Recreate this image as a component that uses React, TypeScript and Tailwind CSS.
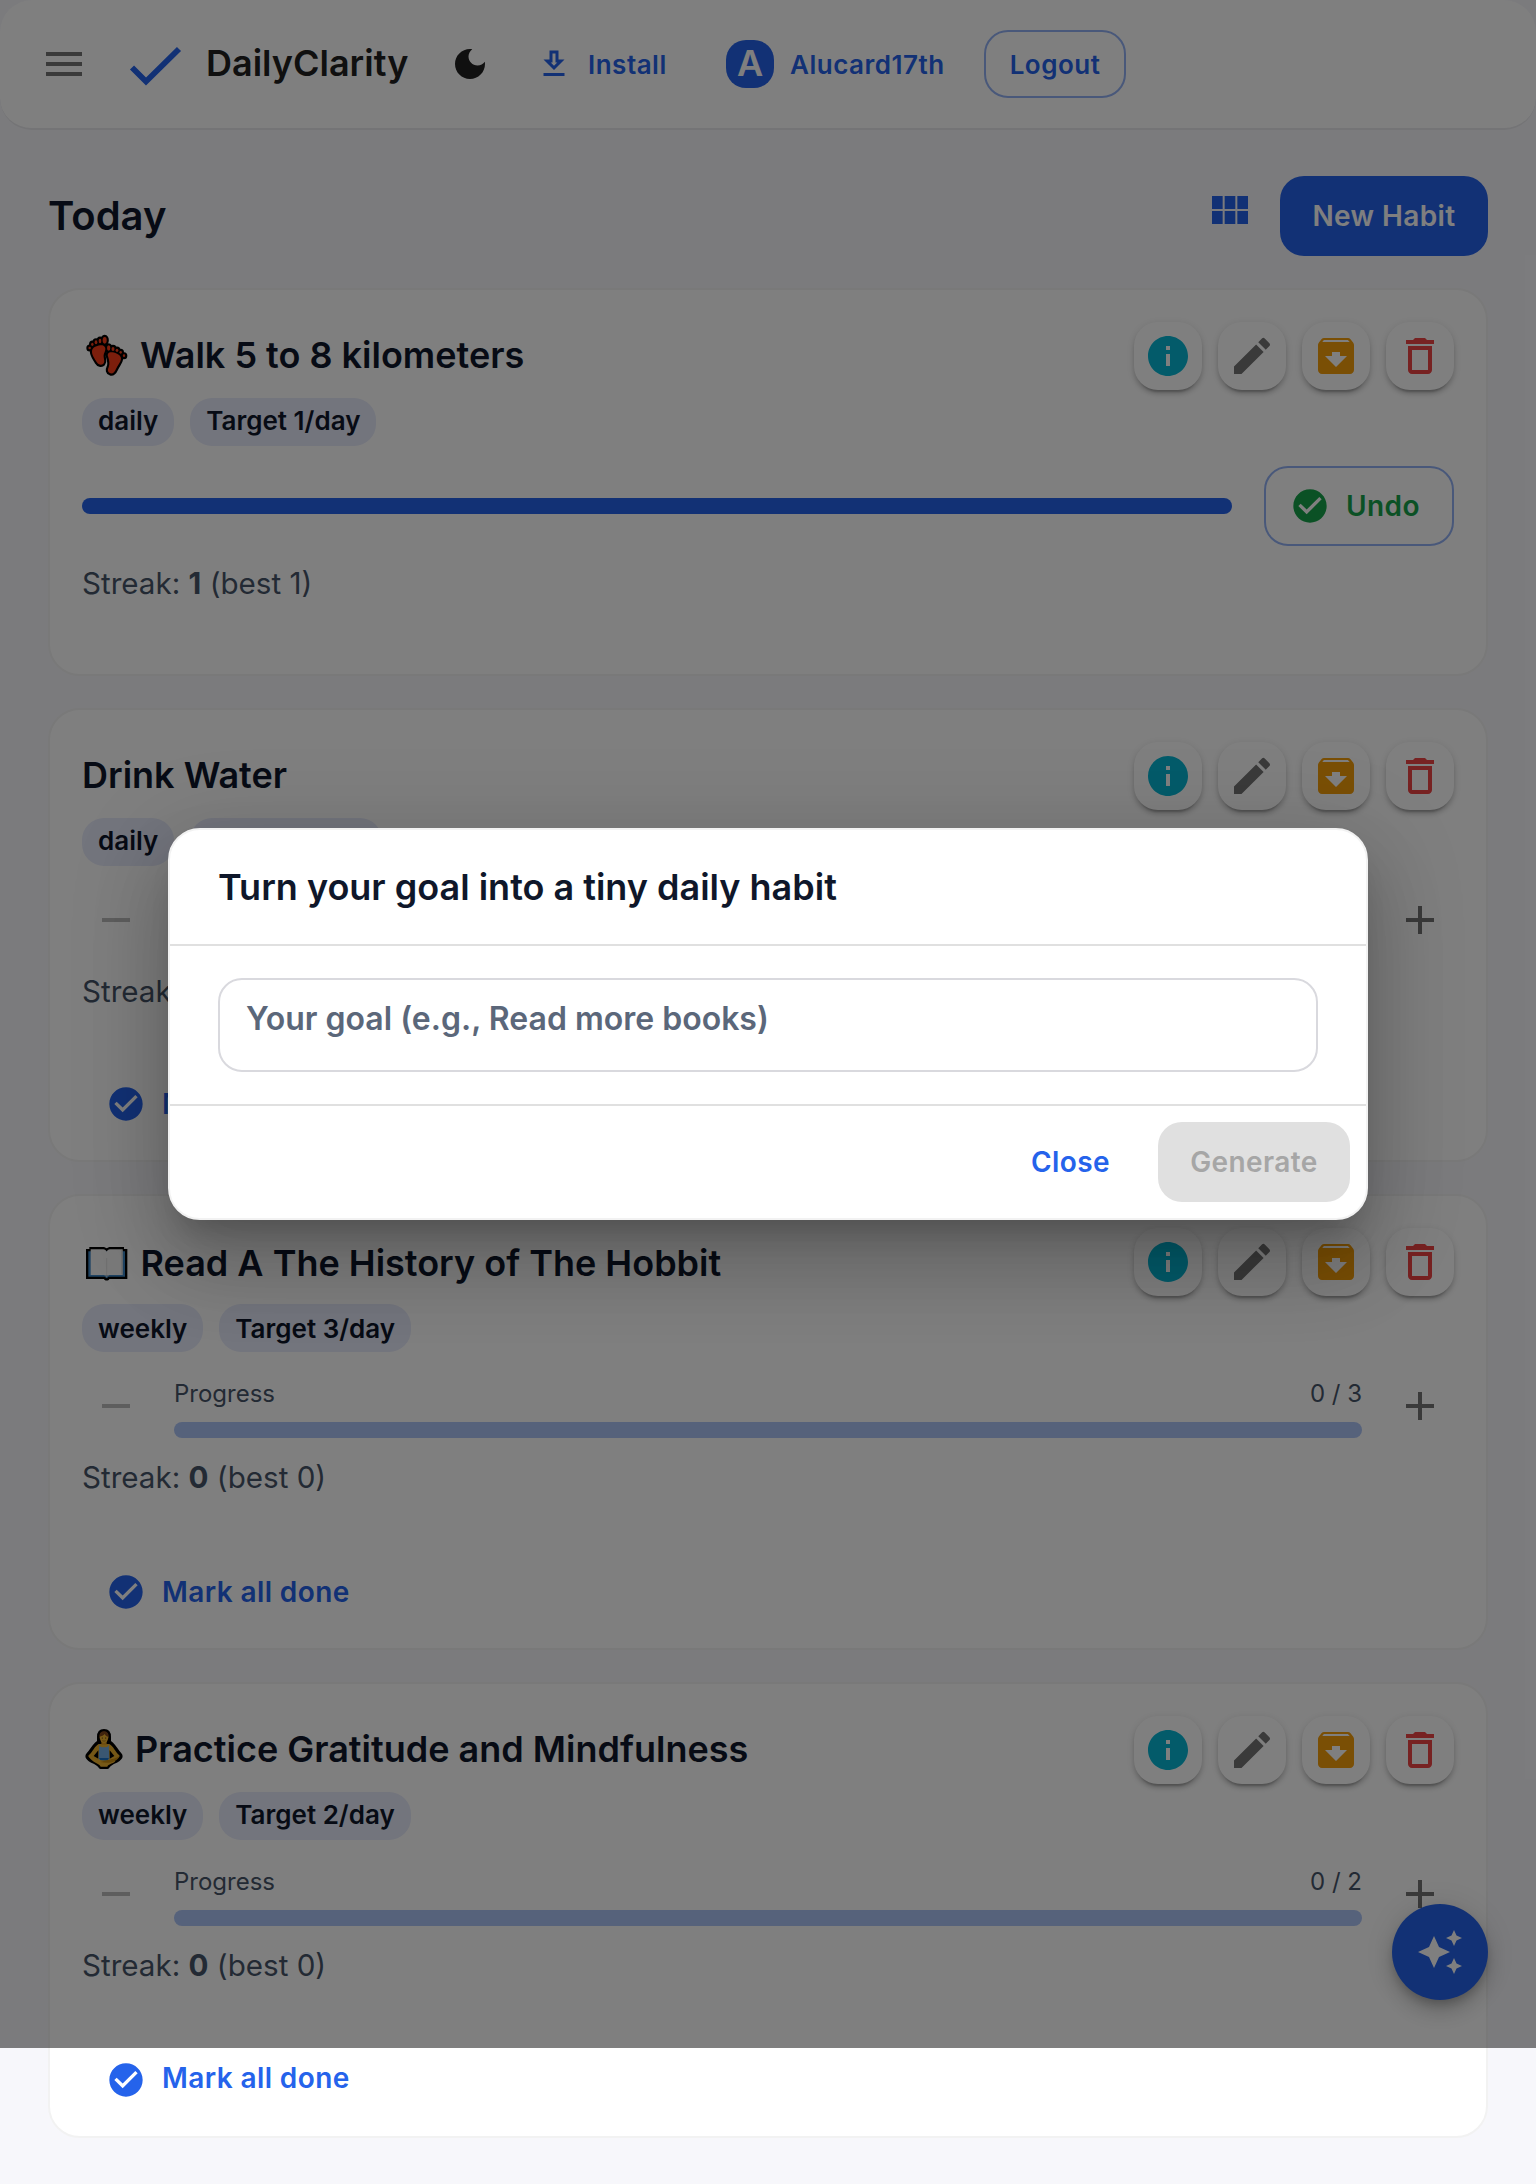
import type { ReactNode } from 'react';

const PATHS = {
  menu: 'M3 18h18v-2H3v2zm0-5h18v-2H3v2zm0-7v2h18V6H3z',
  moon: 'M12 3c-4.97 0-9 4.03-9 9s4.03 9 9 9 9-4.03 9-9c0-.46-.04-.92-.1-1.36-.98 1.37-2.58 2.26-4.4 2.26-2.98 0-5.4-2.42-5.4-5.4 0-1.81.89-3.42 2.26-4.4-.44-.06-.9-.1-1.36-.1z',
  download: 'M19 9h-4V3H9v6H5l7 7 7-7zm-8 2V5h2v6h1.17L12 13.17 9.83 11H11zm-6 7h14v2H5v-2z',
  modules: 'M14.67 5v6.5H9.33V5h5.34zm1 6.5H21V5h-5.33v6.5zm-1 7.5v-6.5H9.33V19h5.34zm1-6.5V19H21v-6.5h-5.33zm-7.34 0H3V19h5.33v-6.5zm0-1V5H3v6.5h5.33z',
  info: 'M12 2C6.48 2 2 6.48 2 12s4.48 10 10 10 10-4.48 10-10S17.52 2 12 2zm1 15h-2v-6h2v6zm0-8h-2V7h2v2z',
  edit: 'M3 17.25V21h3.75L17.81 9.94l-3.75-3.75L3 17.25zM20.71 7.04c.39-.39.39-1.02 0-1.41l-2.34-2.34a.9959.9959 0 0 0-1.41 0l-1.83 1.83 3.75 3.75 1.83-1.83z',
  archive: 'M20.54 5.23l-1.39-1.68C18.88 3.21 18.47 3 18 3H6c-.47 0-.88.21-1.16.55L3.46 5.23C3.17 5.57 3 6.02 3 6.5V19c0 1.1.9 2 2 2h14c1.1 0 2-.9 2-2V6.5c0-.48-.17-.93-.46-1.27zM12 17.5L6.5 12H10v-2h4v2h3.5L12 17.5zM5.12 5l.81-1h12l.94 1H5.12z',
  trash: 'M6 19c0 1.1.9 2 2 2h8c1.1 0 2-.9 2-2V7H6v12zM8 9h8v10H8V9zm7.5-5l-1-1h-5l-1 1H5v2h14V4h-3.5z',
  checkCircle: 'M12 2C6.48 2 2 6.48 2 12s4.48 10 10 10 10-4.48 10-10S17.52 2 12 2zm-2 15l-5-5 1.41-1.41L10 14.17l7.59-7.59L19 8l-9 9z',
  minus: 'M19 13H5v-2h14v2z',
  plus: 'M19 13h-6v6h-2v-6H5v-2h6V5h2v6h6v2z',
  sparkle: 'M19 9l1.25-2.75L23 5l-2.75-1.25L19 1l-1.25 2.75L15 5l2.75 1.25L19 9zm-7.5.5L9 4 6.5 9.5 1 12l5.5 2.5L9 20l2.5-5.5L17 12l-5.5-2.5zM19 15l-1.25 2.75L15 19l2.75 1.25L19 23l1.25-2.75L23 19l-2.75-1.25L19 15z',
};

function Icon({ name, className }: { name: keyof typeof PATHS; className: string }) {
  return (
    <svg viewBox="0 0 24 24" fill="currentColor" className={`shrink-0 ${className}`} aria-hidden="true">
      <path d={PATHS[name]} />
    </svg>
  );
}

function FeetShapes() {
  return (
    <>
      <ellipse cx="29" cy="54" rx="3.5" ry="4" />
      <ellipse cx="37" cy="43" rx="3.5" ry="5" />
      <ellipse cx="48" cy="37" rx="4" ry="6" />
      <ellipse cx="60" cy="33" rx="4" ry="7" />
      <ellipse cx="74" cy="31" rx="6" ry="10" />
      <path d="M36 63c1-10 12-15 25-17 11-2 18 6 14 17-2 7-5 10-4 18 1 9 4 14-1 20-6 6-15 3-20-5-6-10-15-21-14-33z" />
      <ellipse cx="86" cy="54" rx="5" ry="8" />
      <ellipse cx="99" cy="57" rx="4.500" ry="6" />
      <ellipse cx="111" cy="61" rx="4" ry="5" />
      <ellipse cx="122" cy="67" rx="3.500" ry="4" />
      <ellipse cx="132" cy="77" rx="3.500" ry="4" />
      <path d="M84 79c-3-10 5-14 13-12 12 2 27 9 26 20-1 10-10 19-15 30-4 9-9 15-17 13-8-3-9-10-5-18 4-9 2-21-2-33z" />
    </>
  );
}

function FeetEmoji() {
  return (
    <svg viewBox="0 0 168 150" className="-ml-0.5 mr-1 h-[50px] w-[56px] shrink-0" aria-label="footprints">
      <g fill="#000" stroke="#000" strokeWidth="13" strokeLinejoin="round"><FeetShapes /></g>
      <g fill="#f83c18"><FeetShapes /></g>
    </svg>
  );
}

function BookEmoji() {
  return (
    <svg viewBox="0 0 168 150" className="-ml-0.5 mr-[4.5px] h-[50px] w-[56px] shrink-0" aria-label="open book">
      <path d="M18 33h10v-6h44l8 4 8-4h44v6h10v90H88c-2 6-14 6-16 0H18z" fill="#000" />
      <path d="M25 40h110v76H86l-6 5-6-5H25z" fill="#3f86c4" />
      <path d="M32 34h38c5 0 8 3 10 7 2-4 5-7 10-7h38v77H90c-5 0-8 2-10 6-2-4-5-6-10-6H32z" fill="#f4f4f4" />
      <path d="M126 36v73" stroke="#c9c9c9" strokeWidth="3" />
      <path d="M80 60v55" stroke="#dedede" strokeWidth="3" />
      <path d="M80 117l-8-6h16z" fill="#9fb8cc" />
    </svg>
  );
}

function YogaEmoji() {
  return (
    <svg viewBox="0 0 168 150" className="-ml-0.5 -mr-px h-[50px] w-[56px] shrink-0" aria-label="person in lotus position">
      <path d="M72 21c10 0 15 7 15 18v15c13 5 20 26 33 38 5 6-2 14-12 19-14 6-22 10-26 18H62c-4-8-12-12-26-18-10-5-17-13-12-19 13-12 20-33 33-38V39c0-11 5-18 15-18z" fill="#000" stroke="#000" strokeWidth="12" strokeLinejoin="round" />
      <path d="M56 60c-12 6-18 24-30 34-3 5 4 9 12 11l24 5V84h20v26l24-5c8-2 15-6 12-11C106 84 100 66 88 60z" fill="#e9ae2c" />
      <path d="M55 79L41 96l14 8zM89 79l14 17-14 8z" fill="#000" />
      <path d="M64 48h16v14H64z" fill="#d99a1e" />
      <path d="M58 60c1 8 4 10 14 10s13-2 14-10l2 46-16 8-16-8z" fill="#74aee4" />
      <path d="M57 102h30l-6 10H63z" fill="#1b72c6" />
      <path d="M27 97c12 9 26 10 38 12l41 2c-5 8-22 9-24 17H62c-3-9-30-14-35-31z" fill="#efb32e" />
      <path d="M117 97c-10 7-22 9-34 11l-22 6c14 3 30 4 42-2 8-4 14-9 14-15z" fill="#c78a10" />
      <ellipse cx="72" cy="40" rx="13" ry="17" fill="#efb32e" />
      <path d="M58 38c0-11 6-16 14-16s15 6 14 17c-6-1-10-4-12-9-3 5-9 6-16 8z" fill="#80471b" />
      <circle cx="67" cy="42" r="1.800" fill="#3b260c" />
      <circle cx="77" cy="42" r="1.800" fill="#3b260c" />
      <path d="M67 50q5 3 10 0" stroke="#8a5a12" strokeWidth="2" fill="none" />
    </svg>
  );
}

function ActionButton({ name, className }: { name: keyof typeof PATHS; className: string }) {
  return (
    <button className="flex size-[68px] items-center justify-center rounded-[24px] bg-white shadow-[0_6px_2px_-4px_rgba(0,0,0,0.2),0_4px_4px_0_rgba(0,0,0,0.14),0_2px_10px_0_rgba(0,0,0,0.12)]">
      <Icon name={name} className={`size-12 ${className}`} />
    </button>
  );
}

type Habit = {
  title: string;
  emoji?: ReactNode;
  period: string;
  target: number;
  done?: boolean;
  card: string;
  textShift: string;
  markRow: string;
  markText: string;
};

const HABITS: Habit[] = [
  { title: 'Walk 5 to 8 kilometers', emoji: <FeetEmoji />, period: 'daily', target: 1, done: true, card: 'h-[388px]', textShift: 'pb-[3px]', markRow: '', markText: '' },
  { title: 'Drink Water', period: 'daily', target: 2, card: 'h-[454px]', textShift: 'pb-[3px]', markRow: 'mt-[50px]', markText: 'pb-px' },
  { title: 'Read A The History of The Hobbit', emoji: <BookEmoji />, period: 'weekly', target: 3, card: 'h-[456px]', textShift: 'pt-px', markRow: 'mt-[52px]', markText: '' },
  { title: 'Practice Gratitude and Mindfulness', emoji: <YogaEmoji />, period: 'weekly', target: 2, card: 'h-[456px]', textShift: 'pb-[3px]', markRow: 'mt-[52px]', markText: 'pb-1' },
];

function HabitCard({ habit }: { habit: Habit }) {
  const count = habit.done ? 1 : 0;
  const chip = `flex h-12 items-center rounded-[22px] bg-[#e6eafa] px-4 text-[26px] leading-none font-semibold text-[#0f172a] ${habit.textShift}`;
  return (
    <section className={`rounded-[32px] border-2 border-[#f2f2f2] bg-white p-8 ${habit.card}`}>
      <div className="flex items-start justify-between">
        <div>
          <h2 className={`flex h-[66px] items-center text-[36px] leading-none font-semibold whitespace-nowrap text-[#0f172a] ${habit.title.startsWith('Read') ? 'pt-[3px]' : ''}`}>
            {habit.emoji}
            {habit.title}
          </h2>
          <div className="mt-2.5 flex gap-4">
            <span className={chip}>{habit.period}</span>
            <span className={chip}>Target {habit.target}/day</span>
          </div>
        </div>
        <div className="flex gap-4">
          <ActionButton name="info" className="text-[#06b6d4]" />
          <ActionButton name="edit" className="text-[#757575]" />
          <ActionButton name="archive" className="text-[#f59e0b]" />
          <ActionButton name="trash" className="text-[#ef4444]" />
        </div>
      </div>

      {habit.done ? (
        <div className="mt-5 flex items-center gap-8">
          <div className="h-4 flex-1 rounded-full bg-[#2563eb]" />
          <button className="flex h-20 w-[190px] items-center rounded-[24px] border-2 border-[#2563eb]/50 pl-6 text-[28px] leading-none font-semibold tracking-[0.4px] text-[#16a34a]">
            <Icon name="checkCircle" className="mr-4 size-10" />
            Undo
          </button>
        </div>
      ) : (
        <div className="mt-5 flex h-[68px] gap-6">
          <button className="flex w-[68px] items-center justify-center text-[#bdbdbd]">
            <Icon name="minus" className="size-12" />
          </button>
          <div className="flex-1 pt-1.5">
            <div className="flex h-8 items-center justify-between text-[24px] leading-none text-[#475569]">
              <span>Progress</span>
              <span>0 / {habit.target}</span>
            </div>
            <div className="mt-3 h-4 rounded-full bg-[#acc4f7]" />
          </div>
          <button className="flex w-[68px] items-center justify-center text-[#757575]">
            <Icon name="plus" className="size-12" />
          </button>
        </div>
      )}

      <p className="mt-3.5 h-[46px] text-[29.6px] leading-[46px] text-[#475569]">
        Streak: <b className="font-bold">{count}</b> (best {count})
      </p>

      {!habit.done && (
        <button className={`flex h-20 items-center pl-6 text-[28px] leading-none font-semibold tracking-[0.4px] text-[#2563eb] ${habit.markRow}`}>
          <Icon name="checkCircle" className="mr-4 size-10" />
          <span className={habit.markText}>Mark all done</span>
        </button>
      )}
    </section>
  );
}

function Header() {
  return (
    <header className="flex h-[130px] items-center rounded-[32px] border-b-2 border-black/[0.06] bg-white bg-clip-padding pl-10 text-[26px] leading-none font-semibold tracking-[0.5px] text-[#2563eb]">
      <Icon name="menu" className="size-12 text-[#757575]" />
      <svg viewBox="0 0 56 44" className="ml-10 h-11 w-14 shrink-0" aria-hidden="true">
        <path d="M4 25.500L18 39.500L51 7" fill="none" stroke="#2563eb" strokeWidth="5.800" />
      </svg>
      <span className="ml-[22px] w-[202px] pb-[3px] text-[36px] tracking-normal text-[#212121]">DailyClarity</span>
      <Icon name="moon" className="ml-[42px] size-10 text-[#212121]" />
      <Icon name="download" className="ml-[46px] size-9" />
      <span className="ml-4 w-[138px] pt-0.5">Install</span>
      <span className="flex size-12 items-center justify-center rounded-[20px] bg-[#2563eb] pb-0.5 text-[36px] tracking-normal text-white">A</span>
      <span className="ml-4 w-[194px] pt-0.5">Alucard17th</span>
      <button className="flex h-[68px] w-[142px] items-center justify-center rounded-[24px] border-2 border-[#2563eb]/50 pt-0.5">Logout</button>
    </header>
  );
}

function GoalDialog() {
  return (
    <div className="w-[1200px] rounded-[32px] border-2 border-[#f2f2f2] bg-white text-[28px] leading-none font-semibold shadow-[0_22px_30px_-14px_rgba(0,0,0,0.2),0_48px_76px_6px_rgba(0,0,0,0.14),0_18px_92px_16px_rgba(0,0,0,0.12)]">
      <h2 className="flex h-[114px] items-center px-12 text-[36px] text-[#0f172a]">Turn your goal into a tiny daily habit</h2>
      <div className="border-y-2 border-black/[0.12] px-12 py-8">
        <div className="flex h-[94px] rounded-[24px] border-2 border-[#d9d9de] px-[26px] pt-[23px] text-[32px] text-[#5b677a]">
          Your goal (e.g., Read more books)
        </div>
      </div>
      <div className="flex items-center justify-end p-4 tracking-[0.4px]">
        <button className="mr-12 text-[#2563eb]">Close</button>
        <button className="flex h-20 w-[192px] items-center justify-center rounded-[24px] bg-[#e0e0e0] text-[#a6a6a6]">Generate</button>
      </div>
    </div>
  );
}

export default function App() {
  return (
    <div className="relative h-[2184px] w-[1536px] overflow-hidden bg-[#f7f7fb] font-['Inter',sans-serif]">
      <Header />
      <main className="px-12">
        <div className="mt-[46px] flex h-20 items-center">
          <h1 className="text-[40px] leading-none font-semibold text-[#0f172a]">Today</h1>
          <Icon name="modules" className="mb-3 ml-auto size-12 text-[#2563eb]" />
          <button className="ml-[26px] flex h-20 w-52 items-center justify-center rounded-[24px] bg-[#2563eb] text-[28px] leading-none font-semibold tracking-[0.4px] text-white">
            New Habit
          </button>
        </div>
        <div className="mt-8 flex flex-col gap-8">
          {HABITS.map((h) => (
            <HabitCard key={h.title} habit={h} />
          ))}
        </div>
      </main>

      <button className="absolute top-[1904px] right-12 flex size-24 items-center justify-center rounded-full bg-[#2563eb] text-white shadow-[0_6px_10px_-2px_rgba(0,0,0,0.2),0_12px_20px_0_rgba(0,0,0,0.14),0_2px_36px_0_rgba(0,0,0,0.12)]">
        <Icon name="sparkle" className="size-12" />
      </button>

      <div className="absolute inset-x-0 top-0 flex h-[2048px] items-center justify-center bg-black/50">
        <GoalDialog />
      </div>
    </div>
  );
}
